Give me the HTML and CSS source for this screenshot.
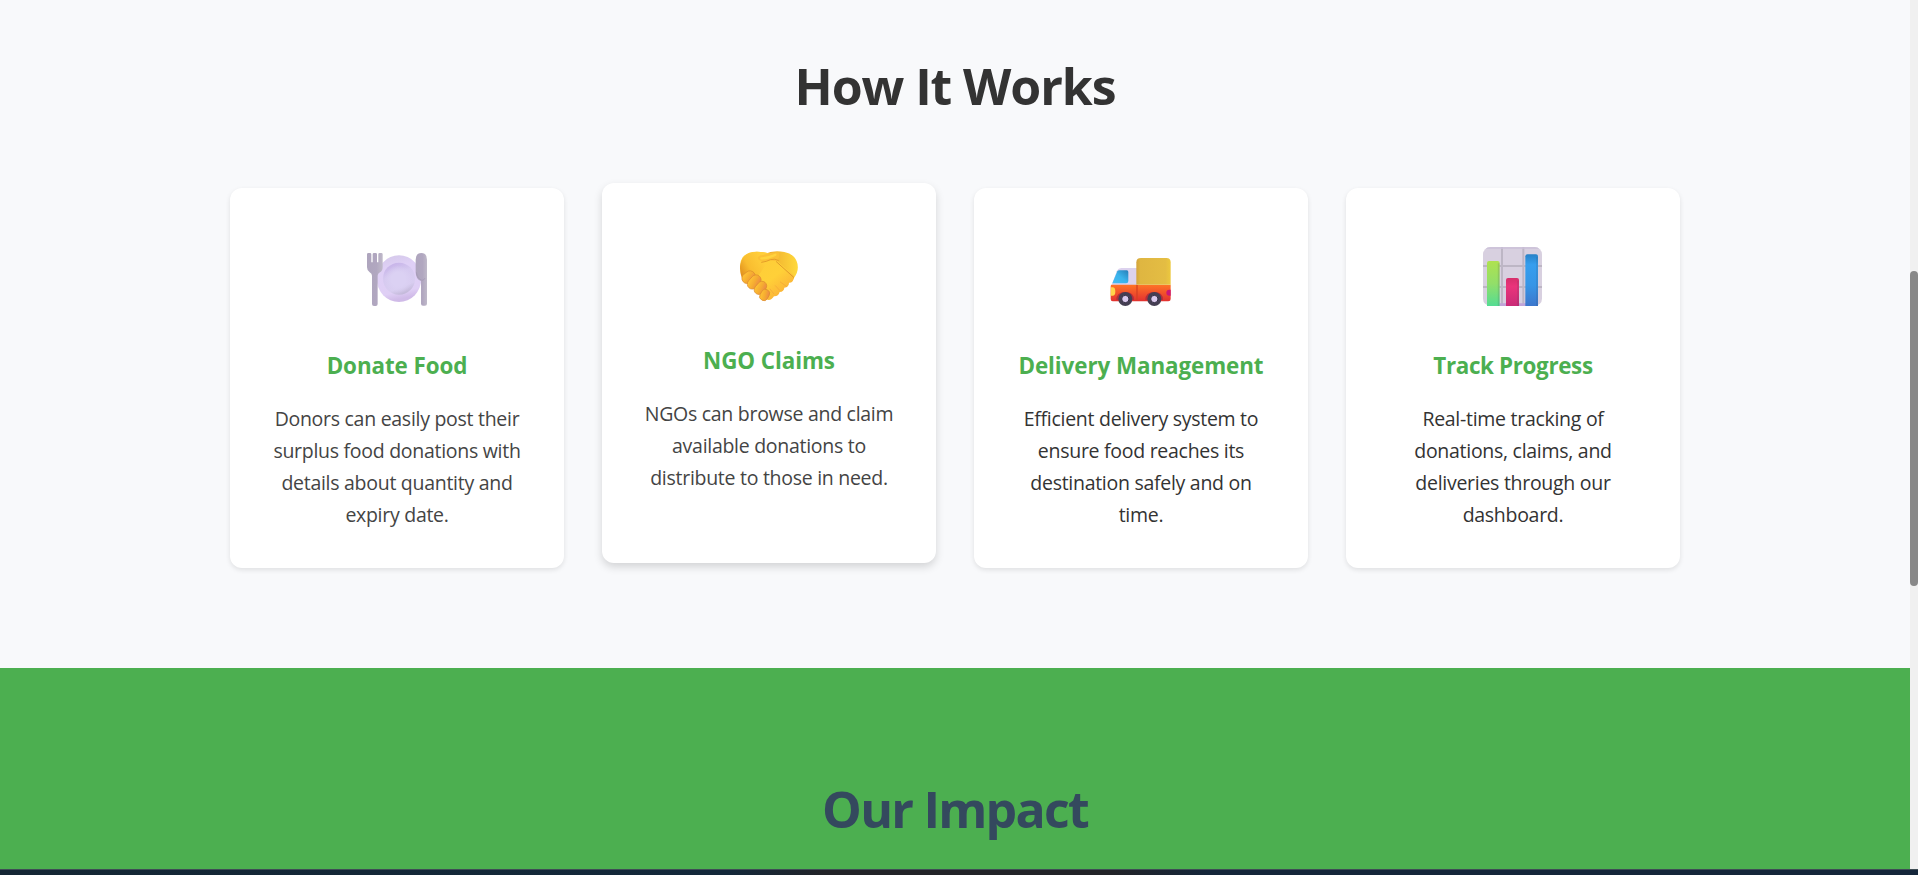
FILE: index.html
```html
<!DOCTYPE html>
<html lang="en">
<head>
<meta charset="utf-8">
<title>How It Works</title>
<link rel="stylesheet" href="styles.css">
</head>
<body>
<div class="screen">
<div class="viewport">
<main class="page">
  <section class="how">
    <h2 class="heading">How It Works</h2>
    <div class="cards">
      <article class="card">
        <svg class="icon" viewBox="6 0 270 240">
          <defs>
            <linearGradient id="rim" x1="0" y1="0" x2="0.2" y2="1"><stop offset="0" stop-color="#d3c8e8"/><stop offset=".3" stop-color="#dfd0f6"/><stop offset=".85" stop-color="#dfcff5"/><stop offset="1" stop-color="#d0bbe8"/></linearGradient>
            <linearGradient id="well" x1=".3" y1="0" x2=".7" y2="1"><stop offset="0" stop-color="#c6b2e8"/><stop offset=".35" stop-color="#d6caf0"/><stop offset=".75" stop-color="#d8cdf0"/><stop offset="1" stop-color="#bfb5d4"/></linearGradient>
            <radialGradient id="shine"><stop offset=".5" stop-color="#dbd1f3"/><stop offset="1" stop-color="#dbd1f3" stop-opacity="0"/></radialGradient>
            <linearGradient id="metal"><stop offset="0" stop-color="#aea5bd"/><stop offset=".6" stop-color="#b1a7c0"/><stop offset="1" stop-color="#bfb9c9"/></linearGradient>
          </defs>
          <ellipse cx="147" cy="131" rx="67" ry="70" fill="url(#rim)"/>
          <circle cx="147" cy="131" r="48" fill="url(#well)"/>
          <circle cx="145" cy="133" r="42" fill="url(#shine)"/>
          <path d="M51 58q0-4 4-4h5q4 0 4 4v24h4V58q0-4 4-4h5q4 0 4 4v24h4V58q0-4 4-4h5q4 0 4 4v39q0 11-8 15-7 4-7 10v85q0 6-6 6h-5q-6 0-6-6v-85q0-6-7-10-8-5-8-15z" fill="url(#metal)"/>
          <path d="M197 74q0-20 17-20 17 0 17 20v132q0 6-6 6h-6q-6 0-6-6v-68q-16-6-16-28z" fill="url(#metal)"/>
          <path d="M199 112q4 20 17 24 8-1 9-7" fill="none" stroke="#a195b3" stroke-width="2"/>
        </svg>
        <h3 class="title">Donate Food</h3>
        <p class="copy">Donors can easily post their<br>surplus food donations with<br>details about quantity and<br>expiry date.</p>
      </article>
      <article class="card card-raised">
        <svg class="icon" viewBox="-3 -15 270 240">
          <defs>
            <linearGradient id="left" x1="0" y1=".7" x2=".8" y2=".2"><stop offset="0" stop-color="#e3931f"/><stop offset=".4" stop-color="#f9bd30"/><stop offset="1" stop-color="#ffce3a"/></linearGradient>
            <linearGradient id="right" x1="0" y1="0" x2=".9" y2="1"><stop offset="0" stop-color="#fdcb38"/><stop offset=".6" stop-color="#ffd038"/><stop offset="1" stop-color="#f9a737"/></linearGradient>
            <linearGradient id="cuff" x1="0" y1=".5" x2="1" y2=".5"><stop offset="0" stop-color="#eca52b"/><stop offset="1" stop-color="#ffd93c"/></linearGradient>
            <linearGradient id="finger" x1=".3" y1="0" x2=".7" y2="1"><stop offset="0" stop-color="#ffc435"/><stop offset=".55" stop-color="#f5ab31"/><stop offset="1" stop-color="#ec8848"/></linearGradient>
          </defs>
          <path d="M118 58q26-14 60-7 28 5 37 28 10 24-8 50l-9 8-80-50z" fill="url(#cuff)"/>
          <path d="M97 50q20 0 34 5l25 22 48 43q6 8 1 14-3 10-13 9 0 13-14 15-1 12-14 13-4 14-17 13-10 16-24 9l-72-66q-13-40 2-60 14-18 44-17z" fill="url(#right)"/>
          <path d="M95 50q18 0 30 4-20 10-19 22 2 12 20 8L98 125l-45 10q-12-30-6-50 8-33 48-35z" fill="url(#left)"/>
          <path d="M154 80l52 47" stroke="#e09b2a" stroke-width="3" fill="none" stroke-linecap="round"/>
          <path d="M112 80q-17-6-13-14 4-6 16-6 20-8 45-9 8 14-6 28-20-6-42 1z" fill="#fbc035"/>
          <path d="M110 82q15-2 26-8 14-4 24 2" fill="none" stroke="#e59d29" stroke-width="3" stroke-linecap="round"/>
          <path d="M109 70q22 0 42-11" fill="none" stroke="#ffd33c" stroke-width="7" stroke-linecap="round"/>
          <path d="M166 141l18 13M151 152l13 14M135 162l11 14" fill="none" stroke="#f3a838" stroke-width="2.5" stroke-linecap="round"/>
          <g stroke="#dc8b2c" stroke-width="2" fill="url(#finger)">
            <rect x="50" y="111" width="42" height="31" rx="15" transform="rotate(-38 71 127)"/>
            <rect x="65" y="126" width="47" height="30" rx="15" transform="rotate(-48 88 142)"/>
            <rect x="85" y="145" width="43" height="28" rx="14" transform="rotate(-50 106 159)"/>
            <rect x="103" y="167" width="35" height="25" rx="12" transform="rotate(-62 120 181)"/>
          </g>
        </svg>
        <h3 class="title">NGO Claims</h3>
        <p class="copy">NGOs can browse and claim<br>available donations to<br>distribute to those in need.</p>
      </article>
      <article class="card">
        <svg class="icon" viewBox="3 -15 270 240">
          <defs>
            <linearGradient id="box" x1="0" y1="0" x2="1" y2="0"><stop offset="0" stop-color="#d3a33b"/><stop offset=".12" stop-color="#dfb641"/><stop offset=".85" stop-color="#e4bd43"/><stop offset="1" stop-color="#ecc83e"/></linearGradient>
            <linearGradient id="body" x1="0" y1="0" x2="0" y2="1"><stop offset="0" stop-color="#ff7426"/><stop offset="1" stop-color="#e23030"/></linearGradient>
            <linearGradient id="glass" x1="0" y1="1" x2="1" y2="0"><stop offset="0" stop-color="#45bdf5"/><stop offset=".5" stop-color="#39b3eb"/><stop offset="1" stop-color="#277eb8"/></linearGradient>
          </defs>
          <path d="M50 134l16-42q4-8 13-8h47v54H49z" fill="#dcd2ee"/>
          <path d="M52 130l15-36q2-3 6-3h22q5 0 5 5v27q0 7-7 7z" fill="url(#glass)"/>
          <path d="M49 134h178v43q0 7-7 7H53q-6 0-6-7v-37q0-5 2-6z" fill="url(#body)"/>
          <path d="M124 134V67q0-13 14-13h76q13 0 13 13v67z" fill="url(#box)"/>
          <path d="M126 135v46" stroke="#d64125" stroke-width="4"/>
          <path d="M48 142h5q8 0 8 13 0 12-8 12h-6z" fill="#ffd44b"/>
          <path d="M227 149h-4q-9 0-9 9t9 9h4z" fill="#cc1775"/>
          <path d="M64 180q0-24 27-24 26 0 26 24M151 180q0-24 27-24 26 0 26 24" fill="#b52d3b"/>
          <g fill="#443e52"><circle cx="91" cy="177" r="21"/><circle cx="178" cy="177" r="21"/></g>
          <g fill="#d9c9ec" stroke="#302a40" stroke-width="3"><circle cx="91" cy="177" r="11"/><circle cx="178" cy="177" r="11"/></g>
        </svg>
        <h3 class="title">Delivery Management</h3>
        <p class="copy copy-sharp">Efficient delivery system to<br>ensure food reaches its<br>destination safely and on<br>time.</p>
      </article>
      <article class="card">
        <svg class="icon" viewBox="-6 0 270 240">
          <defs>
            <linearGradient id="green" x1="0" y1="0" x2="0" y2="1"><stop offset="0" stop-color="#afe150"/><stop offset=".5" stop-color="#92df69"/><stop offset="1" stop-color="#54dc93"/></linearGradient>
            <linearGradient id="pink" x1="0" y1="0" x2="0" y2="1"><stop offset="0" stop-color="#d62f6c"/><stop offset=".3" stop-color="#ea347b"/><stop offset="1" stop-color="#c92b77"/></linearGradient>
            <linearGradient id="blue" x1="0" y1="0" x2="0" y2="1"><stop offset="0" stop-color="#2782c8"/><stop offset=".2" stop-color="#379eee"/><stop offset=".6" stop-color="#3695e6"/><stop offset="1" stop-color="#3c76cc"/></linearGradient>
            <clipPath id="chart"><rect x="39" y="36" width="177" height="177" rx="22"/></clipPath>
          </defs>
          <g clip-path="url(#chart)">
            <path fill="#d8d0e0" d="M39 36h177v177H39z"/>
            <path d="M96 36v177M160 36v177M39 93h177M39 156h177" stroke="#bdb6c5" stroke-width="6"/>
            <path d="M39 39h177" stroke="#cbc0d8" stroke-width="5"/>
            <path d="M88 209h80" stroke="#c0a5d9" stroke-width="8"/>
          </g>
          <path d="M51 213V84q0-6 6-6h26q6 0 6 6v129z" fill="url(#green)"/>
          <path d="M108 213v-78q0-6 6-6h27q6 0 6 6v78z" fill="url(#pink)"/>
          <path d="M166 213V64q0-6 6-6h26q6 0 6 6v149z" fill="url(#blue)"/>
          <path d="M86 85v128M144 137v76M201 66v147" stroke="#39415a" stroke-opacity=".15" stroke-width="5"/>
        </svg>
        <h3 class="title title-tight">Track Progress</h3>
        <p class="copy copy-sharp">Real-time tracking of<br>donations, claims, and<br>deliveries through our<br>dashboard.</p>
      </article>
    </div>
  </section>
  <section class="impact">
    <h2 class="heading heading-impact">Our Impact</h2>
  </section>
</main>
<div class="scroll"><div class="thumb"></div></div>
</div>
<div class="taskbar"></div>
</div>
</body>
</html>
```
FILE: styles.css
```css
* { box-sizing: border-box; }
body { margin: 0; font-family: "Open Sans", "Noto Sans", sans-serif; color: #333; }
h2, h3, p { margin: 0; }
.screen { height: 875px; display: flex; flex-direction: column; overflow: hidden; }
.viewport { flex: 1; display: flex; min-height: 0; }
.page { flex: 1; display: flex; flex-direction: column; overflow: hidden; }
.how { height: 668px; flex: none; background: #f8f9fb; padding: 51px 230px 0; }
.heading { font-size: 50px; line-height: 70px; font-weight: 700; text-align: center; letter-spacing: -1.1px; color: #333; }
.cards { display: grid; grid-template-columns: repeat(4, 1fr); gap: 38px; margin-top: 67px; }
.card { height: 380px; background: #fff; border-radius: 12px; padding-top: 47px; text-align: center; box-shadow: 0 2px 5px rgba(0, 0, 0, 0.1); }
.card-raised { transform: translateY(-5px); box-shadow: 0 4px 8px rgba(0, 0, 0, 0.15); }
.icon { display: block; width: 90px; height: 80px; margin: 0 auto; }
.title { margin-top: 34px; font-size: 22.4px; line-height: 34px; font-weight: 700; letter-spacing: -0.08px; color: #4caf50; white-space: nowrap; }
.title-tight { letter-spacing: -0.35px; }
.copy { margin-top: 20px; font-size: 19.5px; line-height: 32px; letter-spacing: -0.28px; color: #444; white-space: nowrap; }
.copy-sharp { color: #333; }
.impact { flex: 1; background: #4caf50; padding-top: 106px; }
.heading-impact { color: #34495e; letter-spacing: -1.75px; }
.scroll { width: 8px; background: #f0f0f0; padding-top: 271px; }
.thumb { height: 315px; border-radius: 4px; background: #888; }
.taskbar { height: 6px; background: linear-gradient(90deg, #142634 0%, #13283a 38%, #222328 43%, #222328 58%, #14263a 63%, #14263a 100%); border-top: 1px solid #3f4d55; }
```
